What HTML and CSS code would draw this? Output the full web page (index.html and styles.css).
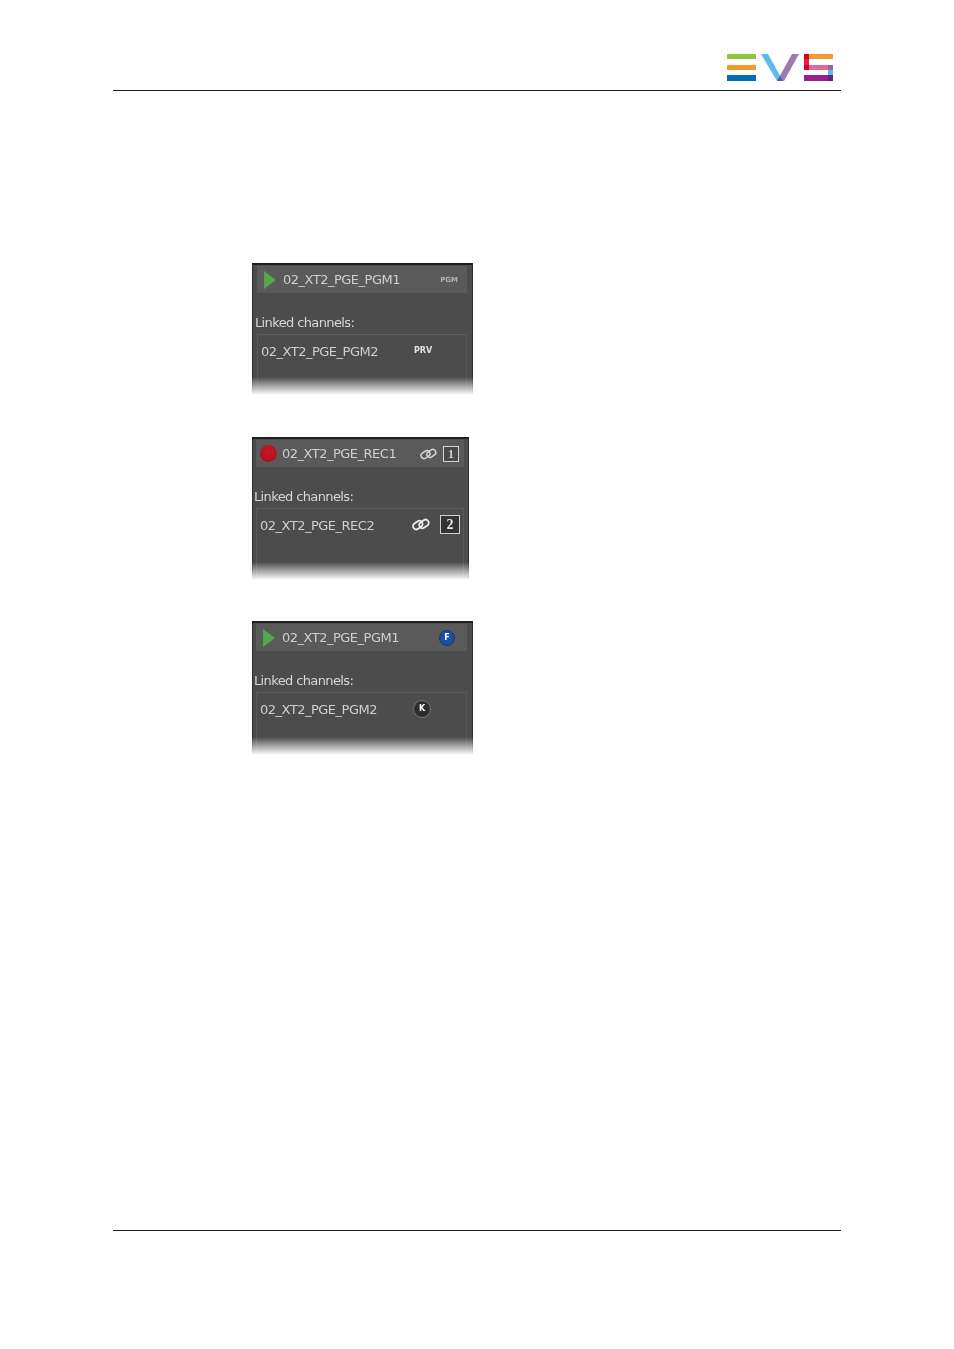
FILE: index.html
```html
<!DOCTYPE html>
<html lang="en">
<head>
  <meta charset="UTF-8" />
  <title>Linked channels</title>
  <link rel="stylesheet" href="styles.css">
</head>
<body>
  <header class="page-head">
    <svg class="logo" viewBox="0 0 106 27" width="106" height="27">
      <rect x="0" y="0" width="29" height="5" fill="#8dc63f" />
      <rect x="0" y="11" width="29" height="5" fill="#f29a2e" />
      <rect x="0" y="21" width="29" height="6" fill="#006fb4" />
      <polygon points="34,0 41,0 56,27 50,27" fill="#5bbcea" />
      <polygon points="65,0 72,0 57,27 50,27" fill="#9b7bb2" />
      <polygon points="50,27 53,22 56,27" fill="#5a5a9c" />
      <rect x="77" y="0" width="5" height="16" fill="#ee1c3a" />
      <rect x="77" y="0" width="5" height="5" fill="#d5002b" />
      <rect x="77" y="11" width="5" height="5" fill="#d5002b" />
      <rect x="82" y="0" width="24" height="5" fill="#f29a2e" />
      <rect x="82" y="11" width="19" height="5" fill="#e0679f" />
      <rect x="101" y="11" width="5" height="5" fill="#8f69a8" />
      <rect x="101" y="16" width="5" height="5" fill="#5bbcea" />
      <rect x="77" y="21" width="24" height="6" fill="#97208e" />
      <rect x="101" y="21" width="5" height="6" fill="#5f2483" />
    </svg>
  </header>

  <main class="figures">
    <!-- playout with PGM / PRV -->
    <section class="panel panel-one">
      <div class="channel-bar">
        <svg class="play" viewBox="0 0 12 18" width="12" height="18"><polygon points="0,0 12,9 0,18" fill="#55a84a" /></svg>
        <span class="channel-name">02_XT2_PGE_PGM1</span>
        <span class="tag tag-dim">PGM</span>
      </div>
      <div class="linked-label">Linked channels:</div>
      <div class="linked-box">
        <span class="channel-name linked-name">02_XT2_PGE_PGM2</span>
        <span class="tag">PRV</span>
      </div>
    </section>

    <!-- recorders -->
    <section class="panel panel-two">
      <div class="channel-bar">
        <span class="rec-dot"></span>
        <span class="channel-name">02_XT2_PGE_REC1</span>
        <svg class="link" viewBox="0 0 18 12" width="17" height="12">
          <g fill="none" stroke="#d8d8d8" stroke-width="1.5">
            <rect x="0.8" y="3.4" width="10" height="6.4" rx="3.2" transform="rotate(-35 5.8 6.6)" />
            <rect x="7" y="2.2" width="10" height="6.4" rx="3.2" transform="rotate(-35 12 5.4)" />
          </g>
        </svg>
        <span class="num-box">1</span>
      </div>
      <div class="linked-label">Linked channels:</div>
      <div class="linked-box">
        <span class="channel-name linked-name">02_XT2_PGE_REC2</span>
        <svg class="link link-big" viewBox="0 0 18 12" width="18" height="13">
          <g fill="none" stroke="#eeeeee" stroke-width="1.7">
            <rect x="0.8" y="3.4" width="10" height="6.4" rx="3.2" transform="rotate(-35 5.8 6.6)" />
            <rect x="7" y="2.2" width="10" height="6.4" rx="3.2" transform="rotate(-35 12 5.4)" />
          </g>
        </svg>
        <span class="num-box num-box-big">2</span>
      </div>
    </section>

    <!-- fill and key -->
    <section class="panel panel-three">
      <div class="channel-bar">
        <svg class="play" viewBox="0 0 12 18" width="12" height="18"><polygon points="0,0 12,9 0,18" fill="#55a84a" /></svg>
        <span class="channel-name">02_XT2_PGE_PGM1</span>
        <span class="badge badge-fill">F</span>
      </div>
      <div class="linked-label">Linked channels:</div>
      <div class="linked-box">
        <span class="channel-name linked-name">02_XT2_PGE_PGM2</span>
        <span class="badge badge-key">K</span>
      </div>
    </section>
  </main>

  <footer class="page-foot"></footer>
</body>
</html>
```

FILE: styles.css
```css
html, body {
  margin: 0;
  padding: 0;
  background: white;
}
body {
  width: 954px;
  height: 1349px;
  box-sizing: border-box;
  padding: 0 113px;
  display: flex;
  flex-direction: column;
  font-family: "DejaVu Sans", sans-serif;
}
.page-head {
  height: 90px;
  display: flex;
  justify-content: flex-end;
  align-items: flex-start;
  border-bottom: 1px solid #222;
}
.logo {
  margin-top: 54px;
  margin-right: 8px;
}
.figures {
  flex: 1;
  display: flex;
  flex-direction: column;
  gap: 41px;
  padding: 172px 0 0 139px;
}
.page-foot {
  height: 118px;
  border-top: 1px solid #222;
}
.panel {
  position: relative;
  box-sizing: border-box;
  width: 221px;
  height: 132px;
  padding: 1px 6px 0 4px;
  display: flex;
  flex-direction: column;
  overflow: hidden;
  background: #4c4c4c;
  border-top: 2px solid #1f1f1f;
  box-shadow: inset 1px 0 #2e2e2e, inset -1px 0 #2e2e2e;
  color: #cfcfcf;
  filter: blur(0.4px);
}
.panel::after {
  content: "";
  position: absolute;
  left: 0;
  right: 0;
  bottom: 0;
  height: 18px;
  background: linear-gradient(to bottom, rgba(255,255,255,0), #fff);
}
.panel-one {
  padding-left: 5px;
}
.panel-two {
  width: 217px;
  height: 143px;
  margin-top: 1px;
  padding-right: 5px;
}
.panel-three {
  height: 134px;
}
.channel-bar {
  display: flex;
  align-items: center;
  flex-shrink: 0;
  height: 27px;
  background: #5a5a5a;
  padding: 0 9px 0 7px;
}
.panel-two .channel-bar {
  padding-left: 4px;
  padding-right: 5px;
}
.panel-three .channel-bar {
  padding-right: 12px;
}
.channel-name {
  font-size: 13px;
  letter-spacing: -0.5px;
  white-space: nowrap;
}
.channel-bar .channel-name {
  margin-left: 7px;
  flex: 1;
}
.panel-two .channel-bar .channel-name {
  margin-left: 5px;
}
.link {
  margin-right: 0;
}
.linked-label {
  flex-shrink: 0;
  margin-top: 20px;
  margin-left: -2px;
  height: 21px;
  font-size: 13px;
  line-height: 20px;
  letter-spacing: -0.62px;
  color: #d6d6d6;
}
.linked-box {
  flex: 1;
  display: flex;
  align-items: flex-start;
  padding: 9px 0 0 3px;
  border-top: 1px solid #5c5c5c;
  border-left: 1px solid #585858;
  border-right: 1px solid #585858;
}
.linked-name {
  width: 153px;
}
.panel-two .linked-name {
  width: 152px;
}
.tag {
  font-size: 8px;
  font-weight: bold;
  color: #e2e2e2;
  margin-top: 2px;
}
.tag-dim {
  font-size: 7px;
  color: #b4b4b4;
  margin-top: 0;
}
.rec-dot {
  width: 17px;
  height: 17px;
  border-radius: 50%;
  background: radial-gradient(circle at 50% 40%, #d01525, #9c1220);
}
.num-box {
  width: 14px;
  height: 14px;
  margin-left: 6px;
  border: 1px solid #d2d2d2;
  font-family: "Liberation Serif", serif;
  font-size: 12px;
  font-weight: bold;
  line-height: 14px;
  text-align: center;
  background: #4a4a4a;
}
.num-box-big {
  width: 18px;
  height: 17px;
  line-height: 17px;
  font-size: 14px;
  background: #333;
  color: #e8e8e8;
  margin-top: -3px;
  margin-left: 10px;
}
.badge {
  width: 16px;
  height: 16px;
  border-radius: 50%;
  font-size: 8px;
  font-weight: bold;
  line-height: 16px;
  text-align: center;
  color: white;
}
.badge-fill {
  background: #1c4fa0;
  border: 1px solid #123a7c;
  box-sizing: border-box;
  line-height: 14px;
}
.badge-key {
  background: #2c2c2c;
  border: 1px solid #777;
  margin-top: -2px;
}
```
